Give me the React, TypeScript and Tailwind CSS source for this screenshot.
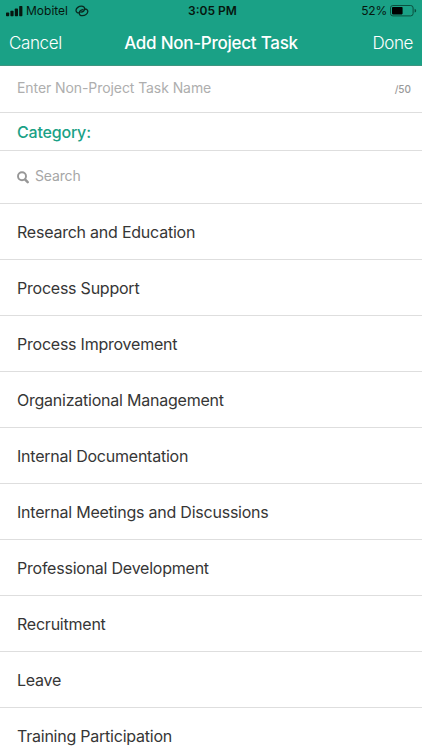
import React from "react";

const categories = [
  "Research and Education",
  "Process Support",
  "Process Improvement",
  "Organizational Management",
  "Internal Documentation",
  "Internal Meetings and Discussions",
  "Professional Development",
  "Recruitment",
  "Leave",
  "Training Participation",
];

function SignalIcon() {
  return (
    <svg width="17" height="11" viewBox="0 0 17 11" fill="#06170f">
      <rect x="0" y="6.6" width="3.2" height="3.6" rx="0.7" />
      <rect x="4.4" y="4.8" width="3.2" height="5.4" rx="0.7" />
      <rect x="8.8" y="2.6" width="3.2" height="7.6" rx="0.7" />
      <rect x="13.2" y="0" width="3.2" height="10.2" rx="0.7" />
    </svg>
  );
}

function LinkIcon() {
  return (
    <svg width="14" height="12" viewBox="0 0 14 12" fill="none" stroke="#0a2a20" strokeWidth="1.3" strokeLinecap="round">
      <path d="M4.2 7.9 C2.2 8 0.9 6.7 1 5.2 C1.2 3 3.8 1.2 6.4 1.2 C8.6 1.2 9.8 2.3 9.6 3.9 C9.4 5.8 7.6 7 5.9 7.2" />
      <path d="M9.6 4 C11.8 3.9 13 5.1 12.8 6.7 C12.5 8.9 10 10.7 7.4 10.7 C5.2 10.7 4.1 9.5 4.3 8 C4.5 6.1 6.3 4.9 7.9 4.7" />
    </svg>
  );
}

function BatteryIcon() {
  return (
    <svg width="27" height="12" viewBox="0 0 27 12">
      <rect x="0.5" y="0.5" width="22.6" height="10.4" rx="2.4" fill="none" stroke="#0b4f3f" />
      <rect x="2" y="2" width="10.6" height="7.4" rx="0.8" fill="#000" />
      <path d="M24.6 3.8 Q26.2 4.4 26.2 5.7 Q26.2 7 24.6 7.6 Z" fill="#0b4f3f" />
    </svg>
  );
}

function SearchIcon() {
  return (
    <svg width="13" height="13" viewBox="0 0 13 13" fill="none" stroke="#979797">
      <circle cx="5" cy="5.2" r="4" strokeWidth="1.9" />
      <path d="M8.2 8.6 L10.7 11.1" strokeWidth="2.5" strokeLinecap="round" />
    </svg>
  );
}

export default function App() {
  return (
    <div className="flex h-[750px] w-[422px] flex-col overflow-hidden bg-white font-['Inter','Liberation_Sans',sans-serif] text-[#363636]">
      <header className="h-[66px] shrink-0 border-b border-[#3d9580] bg-[#1aa186]">
        <div className="grid h-[22px] grid-cols-3 items-center pl-[6px] pr-[5px] text-[12px] leading-[22px] text-[#06170f]">
          <div className="flex items-center">
            <SignalIcon />
            <span className="ml-[3px]">Mobitel</span>
            <span className="ml-[7px]"><LinkIcon /></span>
          </div>
          <span className="pl-[2px] text-center font-semibold">3:05 PM</span>
          <div className="flex items-center justify-end">
            <span className="mr-[3px] tracking-[-0.2px]">52%</span>
            <BatteryIcon />
          </div>
        </div>
        <div className="grid h-[43px] grid-cols-[1fr_auto_1fr] items-center px-[9px] text-[17px] text-white">
          <button className="text-left font-light tracking-[-0.37px]">Cancel</button>
          <h1 className="font-medium tracking-[-0.25px]">Add Non-Project Task</h1>
          <button className="text-right font-light tracking-[-0.4px]">Done</button>
        </div>
      </header>
      <main className="flex flex-col">
        <div className="flex h-[47px] items-center justify-between border-b border-[#dedede] pl-[17px] pr-[11px]">
          <span className="pb-[3px] text-[14px] tracking-[-0.08px] text-[#aeaeae]">Enter Non-Project Task Name</span>
          <span className="text-[10px] font-medium text-[#9a9a9a]">/50</span>
        </div>
        <h2 className="flex h-[38px] items-center border-b border-[#dedede] pl-[17px] text-[16px] font-medium tracking-[-0.2px] text-[#1aa186]">
          Category:
        </h2>
        <div className="flex h-[53px] items-center border-b border-[#dedede] pl-[17px]">
          <SearchIcon />
          <span className="ml-[5px] pb-[3px] text-[14px] tracking-[-0.15px] text-[#a6a6a6]">Search</span>
        </div>
        <ul>
          {categories.map((name) => (
            <li key={name} className="flex h-[56px] items-center border-b border-[#dedede] pl-[17px] text-[16px] tracking-[-0.23px]">
              {name}
            </li>
          ))}
        </ul>
      </main>
    </div>
  );
}
